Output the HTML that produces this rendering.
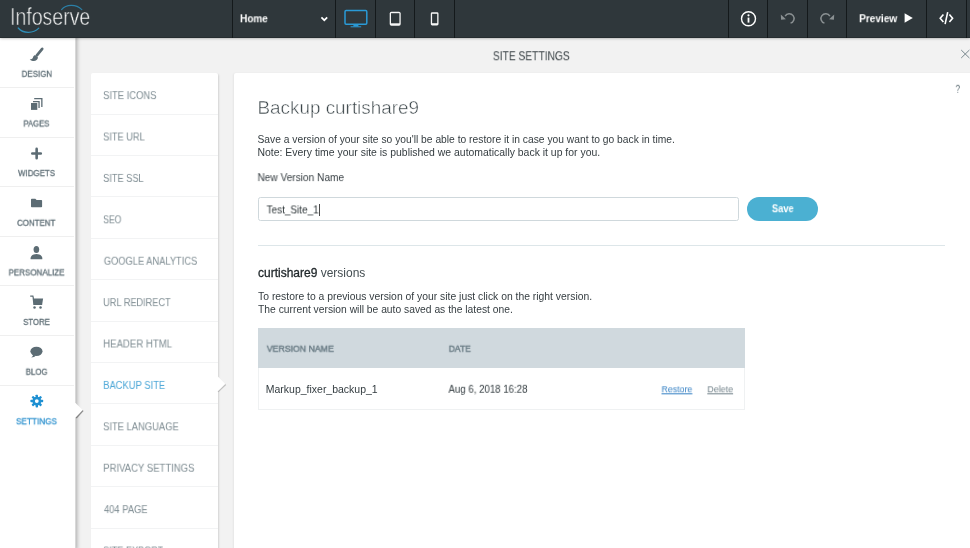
<!DOCTYPE html>
<html lang="en">
<head>
<meta charset="utf-8">
<title>Site Settings - Backup Site</title>
<style>
*{box-sizing:border-box;margin:0;padding:0}
html,body{width:970px;height:548px;overflow:hidden;background:#f2f2f2;font-family:"Liberation Sans",sans-serif}
body{position:relative}
.a,.tx,svg{position:absolute}
.tx{white-space:nowrap;line-height:16px;transform-origin:0 50%;font-weight:400;will-change:transform}
.tx b{font-weight:400;color:#1f2629;-webkit-text-stroke:.3px #1f2629}
#mainbg{left:234px;top:73px;width:740px;height:480px;background:#fff;border-radius:2px 0 0 0;box-shadow:-1px 0 2px rgba(0,0,0,.05)}
#menubg{left:91px;top:73px;width:127px;height:480px;background:#fff;border-radius:2px 2px 0 0;box-shadow:1px 1px 2px rgba(0,0,0,.13)}
.ml{left:91px;width:127px;height:1px;background:#f2f3f4}
#sidebg{left:0;top:30px;width:76px;height:520px;background:#fff;border-right:1px solid #d8d8d8;box-shadow:1px 0 4px rgba(0,0,0,.3)}
.sl{left:0;width:74px;height:1px;background:#efefef}
#topbg{left:0;top:0;width:970px;height:38px;background:#2f373b;border-bottom:1px solid #262d30;box-shadow:0 0 3px rgba(0,0,0,.4)}
.sep{top:0;width:1.4px;height:38px;background:#14191b}
#inpbox{left:258.2px;top:197.4px;width:480.6px;height:23.6px;border:1px solid #cfd8dc;border-radius:2.5px;background:#fff}
#caret{left:319px;top:204px;width:1px;height:12px;background:#4a4a4a}
#savebtn{left:747px;top:197px;width:71px;height:24px;border-radius:12px;background:#4bb0d2}
#hr{left:257.9px;top:244.7px;width:687.4px;height:1px;background:#dde6e9}
#thbg{left:258px;top:328px;width:487px;height:40px;background:#d0d9de}
#trbg{left:258px;top:368px;width:487px;height:42px;background:#fff;border:1px solid #eff1f2;border-top:none}
</style>
</head>
<body>

<main id="main">
  <div class="a" id="mainbg"></div>
  <h1><span class="tx" style="left:257px;top:100px;font-size:18.6px;color:#3c464a;transform:translate(0.47px,0.30px) scaleX(1.0150);-webkit-text-stroke:.45px #fff;">Backup curtishare9</span></h1>
  <span class="tx" style="left:955px;top:80px;font-size:11.4px;color:#5f6f76;transform:translate(0.66px,0.80px) scaleX(0.6819);">?</span>
  <p><span class="tx" style="left:257px;top:131px;font-size:10.2px;color:#353d41;transform:translate(0.42px,0.60px) scaleX(1.0091);">Save a version of your site so you&#39;ll be able to restore it in case you want to go back in time.</span><span class="tx" style="left:257px;top:144px;font-size:10.2px;color:#353d41;transform:translate(0.48px,0.90px) scaleX(1.0240);">Note: Every time your site is published we automatically back it up for you.</span></p>
  <label><span class="tx" style="left:257px;top:170px;font-size:10.2px;color:#353d41;transform:translate(0.51px,0.10px) scaleX(0.9927);">New Version Name</span></label>
  <div class="a" id="inpbox"></div><span class="tx" style="left:266px;top:202px;font-size:10.4px;color:#2b3336;transform:translate(0.59px,0.40px) scaleX(0.9597);">Test_Site_1</span><div class="a" id="caret"></div>
  <div class="a" id="savebtn"></div><span class="tx" style="left:771px;top:201px;font-size:10.0px;color:#ffffff;transform:translate(0.88px,0.20px) scaleX(0.9335);font-weight:700;">Save</span>
  <div class="a" id="hr"></div>
  <h2><span class="tx" style="left:258px;top:264px;font-size:11.9px;color:#444e52;transform:translate(0.01px,0.60px) scaleX(1.0088);"><b>curtishare9</b> versions</span></h2>
  <p><span class="tx" style="left:258px;top:288px;font-size:10.2px;color:#353d41;transform:translate(0.08px,0.80px) scaleX(1.0172);">To restore to a previous version of your site just click on the right version.</span><span class="tx" style="left:258px;top:301px;font-size:10.2px;color:#353d41;transform:translate(0.08px,0.90px) scaleX(1.0109);">The current version will be auto saved as the latest one.</span></p>
  <div class="a" id="thbg"></div><span class="tx" style="left:266px;top:340px;font-size:9.1px;color:#6b7d86;transform:translate(0.75px,0.70px) scaleX(0.9613);-webkit-text-stroke:.45px #6b7d86;">VERSION NAME</span><span class="tx" style="left:448px;top:340px;font-size:9.1px;color:#6b7d86;transform:translate(0.80px,0.70px) scaleX(0.9311);-webkit-text-stroke:.45px #6b7d86;">DATE</span>
  <div class="a" id="trbg"></div><span class="tx" style="left:265px;top:381px;font-size:10.1px;color:#333c40;transform:translate(0.76px,0.80px) scaleX(1.0390);">Markup_fixer_backup_1</span><span class="tx" style="left:448px;top:381px;font-size:10.1px;color:#333c40;transform:translate(0.50px,0.80px) scaleX(0.9566);">Aug 6, 2018 16:28</span><span class="tx" style="left:661px;top:381px;font-size:9.4px;color:#3580c4;transform:translate(0.51px,0.30px) scaleX(0.9383);text-decoration:underline;text-decoration-thickness:.7px;text-underline-offset:1.2px;">Restore</span><span class="tx" style="left:707px;top:381px;font-size:9.4px;color:#73838b;transform:translate(0.30px,0.30px) scaleX(0.9519);text-decoration:underline;text-decoration-thickness:.7px;text-underline-offset:1.2px;">Delete</span>
</main>

<nav id="menu">
  <div class="a" id="menubg"></div>
  <svg style="left:216px;top:374px" width="12" height="20" viewBox="0 0 12 20"><path d="M2 17.6 L9.6 10.4" stroke="#9a9a9a" stroke-width="1.6" fill="none" opacity=".55"/><path d="M0 2.6 H1.9 L9.2 10 L1.9 17.2 H0 Z" fill="#fff"/></svg>
  <span class="tx" style="left:103px;top:88px;font-size:10.0px;color:#7f8d93;transform:translate(0.07px,0.10px) scaleX(0.9425);">SITE ICONS</span><div class="a ml" style="top:113.6px"></div>
  <span class="tx" style="left:103px;top:129px;font-size:10.0px;color:#7f8d93;transform:translate(0.08px,0.50px) scaleX(0.9251);">SITE URL</span><div class="a ml" style="top:155px"></div>
  <span class="tx" style="left:103px;top:170px;font-size:10.0px;color:#7f8d93;transform:translate(0.09px,0.90px) scaleX(0.9229);">SITE SSL</span><div class="a ml" style="top:196.4px"></div>
  <span class="tx" style="left:103px;top:212px;font-size:10.0px;color:#7f8d93;transform:translate(0.15px,0.30px) scaleX(0.8653);">SEO</span><div class="a ml" style="top:237.8px"></div>
  <span class="tx" style="left:103px;top:253px;font-size:10.0px;color:#7f8d93;transform:translate(0.85px,0.70px) scaleX(0.9299);">GOOGLE ANALYTICS</span><div class="a ml" style="top:279.2px"></div>
  <span class="tx" style="left:103px;top:295px;font-size:10.0px;color:#7f8d93;transform:translate(0.13px,0.10px) scaleX(0.9176);">URL REDIRECT</span><div class="a ml" style="top:320.6px"></div>
  <span class="tx" style="left:103px;top:336px;font-size:10.0px;color:#7f8d93;transform:translate(0.14px,0.50px) scaleX(0.9618);">HEADER HTML</span><div class="a ml" style="top:362px"></div>
  <span class="tx" style="left:103px;top:377px;font-size:10.0px;color:#4aa6d7;transform:translate(0.16px,0.90px) scaleX(0.9400);">BACKUP SITE</span><div class="a ml" style="top:403.4px"></div>
  <span class="tx" style="left:103px;top:419px;font-size:10.0px;color:#7f8d93;transform:translate(0.07px,0.30px) scaleX(0.9382);">SITE LANGUAGE</span><div class="a ml" style="top:444.8px"></div>
  <span class="tx" style="left:103px;top:460px;font-size:10.0px;color:#7f8d93;transform:translate(0.15px,0.70px) scaleX(0.9537);">PRIVACY SETTINGS</span><div class="a ml" style="top:486.2px"></div>
  <span class="tx" style="left:103px;top:502px;font-size:10.0px;color:#7f8d93;transform:translate(0.97px,0.10px) scaleX(0.9382);">404 PAGE</span><div class="a ml" style="top:527.6px"></div>
  <span class="tx" style="left:103px;top:543px;font-size:10.0px;color:#7f8d93;transform:translate(0.10px,0.50px) scaleX(0.9128);">SITE EXPORT</span>
</nav>

<div id="titlebar">
  <span class="tx" style="left:492px;top:48px;font-size:12.8px;color:#3a4246;transform:translate(0.88px,0.20px) scaleX(0.7996);">SITE SETTINGS</span>
  <svg style="left:960px;top:49px" width="12" height="10" viewBox="0 0 12 10"><path d="M1.2 1 L9.4 9 M9.4 1 L1.2 9" stroke="#78878d" stroke-width="1" fill="none"/></svg>
</div>

<nav id="side">
  <div class="a" id="sidebg"></div>
  <svg style="left:74px;top:400px" width="14" height="22" viewBox="0 0 14 22"><path d="M2.2 17.9 L9 10.6" stroke="#6a6a6a" stroke-width="1.5" fill="none" opacity=".75" style="filter:blur(.4px)"/><path d="M0 3.1 H1.5 L8.6 10.05 L1.5 17.4 H0 Z" fill="#fff"/></svg>
  <!-- design -->
  <svg style="left:28px;top:46px" width="18" height="18" viewBox="0 0 18 18"><path d="M14.2 2.9 L8.9 9.4" stroke="#5c6c74" stroke-width="2.7" stroke-linecap="round" fill="none"/><path d="M7.3 9.3 L10 11.6 C9.4 15 5.4 16.2 1.7 13.4 C3.8 13.4 4.9 12.6 5.1 11 C5.5 9.8 6.5 9.1 7.3 9.3 Z" fill="#5c6c74"/></svg>
  <span class="tx" style="left:21px;top:65px;font-size:8.8px;color:#5c6c74;transform:translate(0.62px,0.80px) scaleX(0.9065);-webkit-text-stroke:.28px #5c6c74;">DESIGN</span><div class="a sl" style="top:87px"></div>
  <!-- pages -->
  <svg style="left:30px;top:97px" width="14" height="14" viewBox="0 0 14 14"><rect x="1" y="6" width="6.3" height="6.9" fill="#5c6c74"/><path d="M3 4.65 H9.05 V10.9" fill="none" stroke="#5c6c74" stroke-width="1.3"/><path d="M4.2 1.65 H11.85 V9.9" fill="none" stroke="#5c6c74" stroke-width="1.3"/></svg>
  <span class="tx" style="left:23px;top:115px;font-size:8.8px;color:#5c6c74;transform:translate(0.43px,0.50px) scaleX(0.8731);-webkit-text-stroke:.28px #5c6c74;">PAGES</span><div class="a sl" style="top:136.6px"></div>
  <!-- widgets -->
  <svg style="left:30px;top:147px" width="14" height="14" viewBox="0 0 14 14"><path d="M6.65 1.9 V11.2 M2.3 6.45 H10.8" stroke="#5c6c74" stroke-width="2.6" stroke-linecap="round" fill="none"/></svg>
  <span class="tx" style="left:18px;top:165px;font-size:8.8px;color:#5c6c74;transform:translate(0.06px,0.10px) scaleX(0.9003);-webkit-text-stroke:.28px #5c6c74;">WIDGETS</span><div class="a sl" style="top:186.2px"></div>
  <!-- content -->
  <svg style="left:30px;top:198px" width="14" height="11" viewBox="0 0 14 11"><path d="M1 1.6 Q1 .8 1.8 .8 H5.3 L6.6 2 H11.3 Q12.1 2 12.1 2.8 V8.5 Q12.1 9.3 11.3 9.3 H1.8 Q1 9.3 1 8.5 Z" fill="#5c6c74"/></svg>
  <span class="tx" style="left:17px;top:214px;font-size:8.8px;color:#5c6c74;transform:translate(0.08px,0.80px) scaleX(0.8973);-webkit-text-stroke:.28px #5c6c74;">CONTENT</span><div class="a sl" style="top:235.8px"></div>
  <!-- personalize -->
  <svg style="left:29px;top:245px" width="15" height="16" viewBox="0 0 15 16"><ellipse cx="7.4" cy="4.5" rx="2.8" ry="3.55" fill="#5c6c74"/><path d="M1.6 14.3 V13.2 C1.6 10.6 4.6 9.05 7.45 9.05 C10.3 9.05 13.3 10.6 13.3 13.2 V14.3 Z" fill="#5c6c74"/></svg>
  <span class="tx" style="left:8px;top:264px;font-size:8.8px;color:#5c6c74;transform:translate(0.62px,0.40px) scaleX(0.9065);-webkit-text-stroke:.28px #5c6c74;">PERSONALIZE</span><div class="a sl" style="top:285.4px"></div>
  <!-- store -->
  <svg style="left:29px;top:294px" width="16" height="16" viewBox="0 0 16 16"><path d="M1.2 2.2 H3.9 L4.5 5" fill="none" stroke="#5c6c74" stroke-width="1.2"/><path d="M3.7 4.4 H14.1 L13.1 11.05 H4.3 Z" fill="#5c6c74"/><circle cx="5.5" cy="13.5" r="1.25" fill="#5c6c74"/><circle cx="11.5" cy="13.5" r="1.25" fill="#5c6c74"/></svg>
  <span class="tx" style="left:23px;top:313px;font-size:8.8px;color:#5c6c74;transform:translate(0.21px,0.90px) scaleX(0.8826);-webkit-text-stroke:.28px #5c6c74;">STORE</span><div class="a sl" style="top:335px"></div>
  <!-- blog -->
  <svg style="left:29px;top:346px" width="15" height="13" viewBox="0 0 15 13"><ellipse cx="7.45" cy="5.35" rx="6.05" ry="4.7" fill="#5c6c74"/><path d="M4 8.6 C4 10 3.4 10.8 2.3 11.5 C4.2 11.5 5.8 10.8 6.6 9.8 Z" fill="#5c6c74"/></svg>
  <span class="tx" style="left:25px;top:363px;font-size:8.8px;color:#5c6c74;transform:translate(0.72px,0.70px) scaleX(0.8974);-webkit-text-stroke:.28px #5c6c74;">BLOG</span><div class="a sl" style="top:384.8px"></div>
  <!-- settings -->
  <svg style="left:30px;top:394px" width="14" height="15" viewBox="0 0 14 15"><g fill="#1e90d2"><circle cx="6.8" cy="7.05" r="4.4"/><rect x="5.6" y=".65" width="2.4" height="12.8" rx=".7" transform="rotate(0 6.8 7.05)"/><rect x="5.6" y=".65" width="2.4" height="12.8" rx=".7" transform="rotate(45 6.8 7.05)"/><rect x="5.6" y=".65" width="2.4" height="12.8" rx=".7" transform="rotate(90 6.8 7.05)"/><rect x="5.6" y=".65" width="2.4" height="12.8" rx=".7" transform="rotate(135 6.8 7.05)"/></g><circle cx="6.8" cy="7.05" r="1.9" fill="#fff"/></svg>
  <span class="tx" style="left:15px;top:413px;font-size:8.8px;color:#3193cf;transform:translate(0.99px,0.30px) scaleX(0.9337);-webkit-text-stroke:.28px #3193cf;">SETTINGS</span>
</nav>

<header id="top">
  <div class="a" id="topbg"></div>
  <span class="tx" style="left:10px;top:9px;font-size:24.2px;color:#f6f6f6;transform:translate(0.02px,0.00px) scaleX(0.8060);-webkit-text-stroke:.5px #2f373b;">Infoserve</span>
  <svg style="left:0;top:0" width="100" height="37" viewBox="0 0 100 37"><path d="M18.2 28 C23 33.6 33 34 38.8 28.2" fill="none" stroke="#2f8db6" stroke-width="1.2" stroke-linecap="round"/><path d="M61.6 9.6 C66 4.2 76 3.8 81.8 9.6" fill="none" stroke="#2b7fa6" stroke-width="1.2" stroke-linecap="round"/></svg>
  <div class="a sep" style="left:231.5px"></div>
  <span class="tx" style="left:240px;top:11px;font-size:10.4px;color:#ffffff;transform:translate(0.07px,0.30px) scaleX(0.9636);font-weight:700;">Home</span>
  <svg style="left:319px;top:14px" width="11" height="10" viewBox="0 0 11 10"><path d="M2.4 3.4 L5.3 6.2 L8.2 3.4" fill="none" stroke="#fff" stroke-width="1.7"/></svg>
  <div class="a sep" style="left:334.6px"></div>
  <svg style="left:343px;top:8px" width="26" height="21" viewBox="0 0 26 21"><rect x="2" y="2.6" width="21.8" height="13.6" rx="1.1" fill="none" stroke="#2a9ad6" stroke-width="1.5"/><path d="M10.6 16.4 L10.2 18.4 H15.6 L15.2 16.4 Z" fill="#2a9ad6"/><path d="M7.6 18.8 H18.2" stroke="#2a9ad6" stroke-width="1"/></svg>
  <div class="a sep" style="left:374.8px"></div>
  <svg style="left:388px;top:10px" width="14" height="17" viewBox="0 0 14 17"><rect x="1.7" y="1.7" width="11" height="14" rx="1.7" fill="#f6f6f6"/><rect x="3" y="3.2" width="8.4" height="10.1" fill="#2f373b"/></svg>
  <div class="a sep" style="left:413.8px"></div>
  <svg style="left:429px;top:11px" width="11" height="16" viewBox="0 0 11 16"><rect x="1.8" y="1.3" width="7.7" height="13.2" rx="1.4" fill="#f6f6f6"/><rect x="3.1" y="2.8" width="5.1" height="9.4" fill="#2f373b"/></svg>
  <div class="a sep" style="left:453.7px"></div>

  <div class="a sep" style="left:727.6px"></div>
  <svg style="left:739px;top:9px" width="19" height="19" viewBox="0 0 19 19"><circle cx="9.5" cy="9.7" r="7" fill="none" stroke="#fff" stroke-width="1.4"/><rect x="8.6" y="8.6" width="1.8" height="5" fill="#fff"/><circle cx="9.5" cy="6.3" r="1.1" fill="#fff"/></svg>
  <div class="a sep" style="left:766.7px"></div>
  <svg style="left:779px;top:11px" width="17" height="15" viewBox="0 0 17 15"><path d="M6.14 5.1 A4.8 4.8 0 1 1 11.54 12.14" fill="none" stroke="#8a9092" stroke-width="1.5"/><path d="M1.8 3.6 L2.1 8.8 L6.9 8.2 Z" fill="#8a9092"/></svg>
  <div class="a sep" style="left:806.6px"></div>
  <svg style="left:819px;top:11px" width="17" height="15" viewBox="0 0 17 15"><g transform="translate(17 0) scale(-1 1)"><path d="M6.14 5.1 A4.8 4.8 0 1 1 11.54 12.14" fill="none" stroke="#8a9092" stroke-width="1.5"/><path d="M1.8 3.6 L2.1 8.8 L6.9 8.2 Z" fill="#8a9092"/></g></svg>
  <div class="a sep" style="left:845.5px"></div>
  <span class="tx" style="left:859px;top:10px;font-size:11.0px;color:#ffffff;transform:translate(0.16px,0.20px) scaleX(0.9141);font-weight:700;">Preview</span>
  <svg style="left:903px;top:12px" width="12" height="12" viewBox="0 0 12 12"><path d="M1.6 1.3 L9.8 6 L1.6 10.7 Z" fill="#fff"/></svg>
  <div class="a sep" style="left:925.8px"></div>
  <svg style="left:938px;top:10px" width="17" height="16" viewBox="0 0 17 16"><path d="M5.4 4.4 L2.2 8.2 L5.4 12 M11.4 4.4 L14.6 8.2 L11.4 12 M9.7 2.2 L7.1 14.2" fill="none" stroke="#fff" stroke-width="1.6"/></svg>
  <div class="a sep" style="left:965.6px"></div>
</header>
</body>
</html>
